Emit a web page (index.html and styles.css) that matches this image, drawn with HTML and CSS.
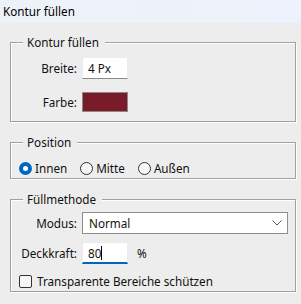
FILE: index.html
```html
<!DOCTYPE html>
<html lang="de">
<head>
    <meta charset="UTF-8">
    <meta name="viewport" content="width=device-width, initial-scale=1.0">
    <title>Kontur füllen</title>
    <link rel="stylesheet" href="styles.css">
</head>
<body>
    <div class="titlebar">Kontur füllen</div>

    <div class="dialog">
        <fieldset class="group">
            <legend>Kontur füllen</legend>
            <div class="row row-width">
                <label class="row-label" for="breite">Breite:</label>
                <input class="field field-small" id="breite" type="text" value="4 Px">
            </div>
            <div class="row row-color">
                <span class="row-label">Farbe:</span>
                <span class="swatch"></span>
            </div>
        </fieldset>

        <fieldset class="group">
            <legend>Position</legend>
            <div class="radios">
                <label class="radio"><span class="radio-dot checked"></span>Innen</label>
                <label class="radio"><span class="radio-dot"></span>Mitte</label>
                <label class="radio"><span class="radio-dot"></span>Außen</label>
            </div>
        </fieldset>

        <fieldset class="group">
            <legend>Füllmethode</legend>
            <div class="row row-mode">
                <span class="row-label">Modus:</span>
                <div class="select">
                    <span>Normal</span>
                    <svg class="chevron" width="10" height="6" viewBox="0 0 10 6">
                        <path d="M0.5 0.5 L5 5 L9.5 0.5" fill="none" stroke="#555" stroke-width="1"/>
                    </svg>
                </div>
            </div>
            <div class="row row-opacity">
                <span class="row-label">Deckkraft:</span>
                <div class="field field-small field-focus">80<span class="caret"></span></div>
                <span class="unit">%</span>
            </div>
            <label class="check">
                <span class="check-box"></span>Transparente Bereiche schützen
            </label>
        </fieldset>
    </div>
</body>
</html>
```

FILE: styles.css
```css
/* Global */
body {
    margin: 0;
    background-color: #ededed;
    font-family: 'Noto Sans', sans-serif;
    font-size: 11.7px;
    line-height: 16px;
    color: #111;
}

/* Title bar */
.titlebar {
    height: 23px;
    line-height: 22px;
    padding-left: 3px;
    background: linear-gradient(to right, #eef2f8, #edf2fc);
    color: #000;
}

/* Groups */
.dialog {
    padding: 11px 5px 0 10px;
}

.group {
    margin: 0 0 12px;
    padding: 0 0 0 8px;
    border: 1px solid #a0a0a0;
    box-shadow: inset 1px 1px 0 #fff, 1px 1px 0 #fff;
}

.group legend {
    margin-left: 4px;
    padding: 0 6px 0 4px;
    line-height: 16px;
    background-color: #ededed;
}

/* Rows */
.row {
    display: flex;
    align-items: center;
    margin-left: -8px;
}

.row-label {
    width: 66px;
    margin-right: 5px;
    text-align: right;
}

.row-width {
    margin-top: 7px;
}

.row-color {
    margin-top: 13px;
    margin-bottom: 9px;
}

.row-mode {
    margin-top: 5px;
}

.row-opacity {
    margin-top: 8px;
}

.field {
    box-sizing: border-box;
    height: 22px;
    padding: 0 5px;
    border: 1px solid #ececec;
    border-bottom-color: #8a8a8a;
    background-color: #fff;
    font: inherit;
    color: #111;
    outline: none;
}

.field-small {
    width: 46px;
}

.field-focus {
    display: flex;
    align-items: center;
    border-bottom: 2px solid #0067c0;
}

.caret {
    width: 1px;
    height: 14px;
    background-color: #000;
}

.unit {
    margin-left: 9px;
}

.swatch {
    box-sizing: border-box;
    width: 46px;
    height: 20px;
    border: 1px solid #8a8a8a;
    background-color: #7a1b29;
}

.select {
    box-sizing: border-box;
    display: flex;
    align-items: center;
    justify-content: space-between;
    width: 206px;
    height: 22px;
    padding: 0 5px 0 6px;
    border: 1px solid #8f8f8f;
    background-color: #fff;
}

/* Radios */
.radios {
    display: flex;
    gap: 13px;
    margin: 10px 0 2px;
}

.radio {
    display: flex;
    align-items: center;
    gap: 3px;
}

.radio-dot {
    box-sizing: border-box;
    width: 13px;
    height: 13px;
    border: 1px solid #333;
    border-radius: 50%;
    background-color: #f6f6f6;
}

.radio-dot.checked {
    border: 4px solid #0067c0;
    background-color: #fff;
}

/* Checkbox */
.check {
    display: flex;
    align-items: center;
    gap: 5px;
    margin: 9px 0 2px;
}

.check-box {
    box-sizing: border-box;
    width: 13px;
    height: 13px;
    border: 1px solid #333;
    border-radius: 2px;
    background-color: #f6f6f6;
}
```
